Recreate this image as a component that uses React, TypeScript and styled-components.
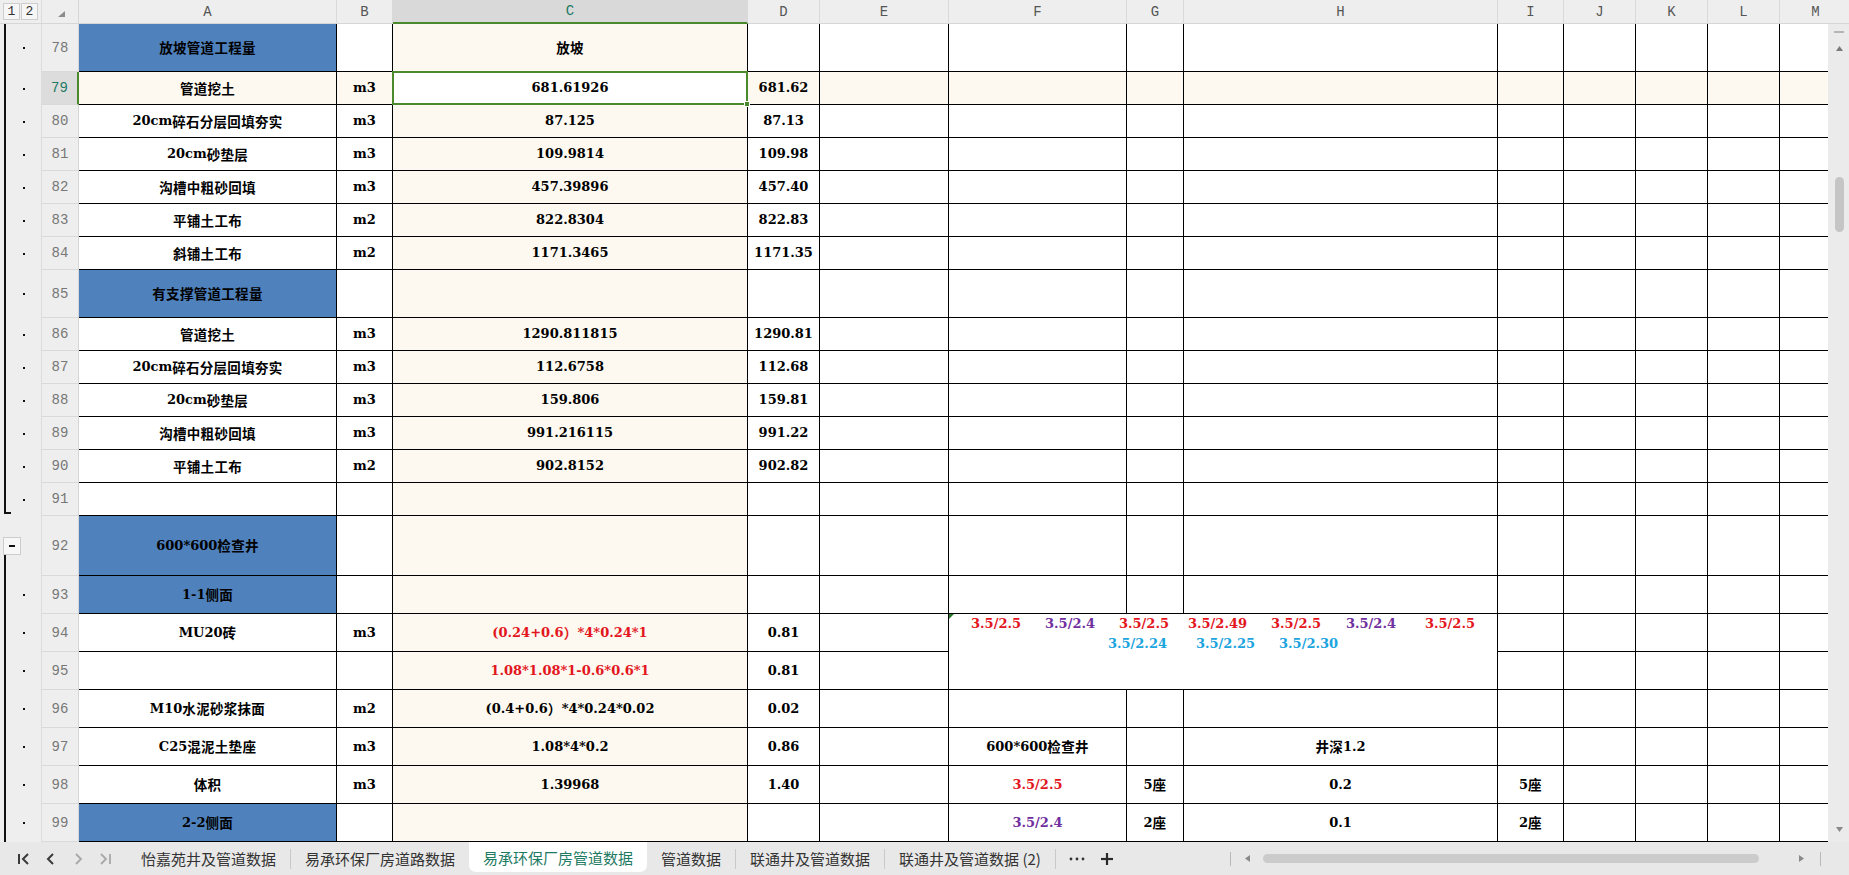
import React from 'react';
import styled, { createGlobalStyle, css } from 'styled-components';

const GlobalStyle = createGlobalStyle`
  html, body { margin: 0; padding: 0; background: #ffffff; }
  body { width: 1849px; height: 875px; overflow: hidden; }
  *, *::before, *::after { box-sizing: border-box; }
`;

const GREEN = '#4b8a2c';
const TEAL = '#1d7a63';
const CREAM = '#fdf9f0';
const BLUE = '#4f81bd';
const RED = '#e3161e';
const PURPLE = '#7030a0';
const CYAN = '#1ba4de';

const COLS = ['A', 'B', 'C', 'D', 'E', 'F', 'G', 'H', 'I', 'J', 'K', 'L', 'M'] as const;
type Col = (typeof COLS)[number];
const COL_W: Record<Col, number> = {
  A: 258, B: 56, C: 355, D: 72, E: 129, F: 178, G: 57, H: 314, I: 66, J: 72, K: 72, L: 72, M: 72,
};

type CellDef = { t?: string; color?: string; blue?: boolean };
type GMode = 'line' | 'end' | 'button';
type RowDef = { n: number; h: number; g: GMode; cells: Partial<Record<Col, CellDef>> };

const item = (a: string, b: string, c: string, d: string) => ({
  A: { t: a }, B: { t: b }, C: { t: c }, D: { t: d },
});

const ROWS: RowDef[] = [
  { n: 78, h: 48, g: 'line', cells: { A: { t: '放坡管道工程量', blue: true }, C: { t: '放坡' } } },
  { n: 79, h: 33, g: 'line', cells: item('管道挖土', 'm3', '681.61926', '681.62') },
  { n: 80, h: 33, g: 'line', cells: item('20cm碎石分层回填夯实', 'm3', '87.125', '87.13') },
  { n: 81, h: 33, g: 'line', cells: item('20cm砂垫层', 'm3', '109.9814', '109.98') },
  { n: 82, h: 33, g: 'line', cells: item('沟槽中粗砂回填', 'm3', '457.39896', '457.40') },
  { n: 83, h: 33, g: 'line', cells: item('平铺土工布', 'm2', '822.8304', '822.83') },
  { n: 84, h: 33, g: 'line', cells: item('斜铺土工布', 'm2', '1171.3465', '1171.35') },
  { n: 85, h: 48, g: 'line', cells: { A: { t: '有支撑管道工程量', blue: true } } },
  { n: 86, h: 33, g: 'line', cells: item('管道挖土', 'm3', '1290.811815', '1290.81') },
  { n: 87, h: 33, g: 'line', cells: item('20cm碎石分层回填夯实', 'm3', '112.6758', '112.68') },
  { n: 88, h: 33, g: 'line', cells: item('20cm砂垫层', 'm3', '159.806', '159.81') },
  { n: 89, h: 33, g: 'line', cells: item('沟槽中粗砂回填', 'm3', '991.216115', '991.22') },
  { n: 90, h: 33, g: 'line', cells: item('平铺土工布', 'm2', '902.8152', '902.82') },
  { n: 91, h: 33, g: 'end', cells: {} },
  { n: 92, h: 60, g: 'button', cells: { A: { t: '600*600检查井', blue: true } } },
  { n: 93, h: 38, g: 'line', cells: { A: { t: '1-1侧面', blue: true } } },
  {
    n: 94, h: 38, g: 'line',
    cells: { A: { t: 'MU20砖' }, B: { t: 'm3' }, C: { t: '(0.24+0.6）*4*0.24*1', color: RED }, D: { t: '0.81' } },
  },
  { n: 95, h: 38, g: 'line', cells: { C: { t: '1.08*1.08*1-0.6*0.6*1', color: RED }, D: { t: '0.81' } } },
  { n: 96, h: 38, g: 'line', cells: item('M10水泥砂浆抹面', 'm2', '(0.4+0.6）*4*0.24*0.02', '0.02') },
  {
    n: 97, h: 38, g: 'line',
    cells: { ...item('C25混泥土垫座', 'm3', '1.08*4*0.2', '0.86'), F: { t: '600*600检查井' }, H: { t: '井深1.2' } },
  },
  {
    n: 98, h: 38, g: 'line',
    cells: {
      ...item('体积', 'm3', '1.39968', '1.40'),
      F: { t: '3.5/2.5', color: RED }, G: { t: '5座' }, H: { t: '0.2' }, I: { t: '5座' },
    },
  },
  {
    n: 99, h: 38, g: 'line',
    cells: {
      A: { t: '2-2侧面', blue: true },
      F: { t: '3.5/2.4', color: PURPLE }, G: { t: '2座' }, H: { t: '0.1' }, I: { t: '2座' },
    },
  },
];

const NOTE_LINES: { t: string; color: string; gap: number }[][] = [
  [
    { t: '3.5/2.5', color: RED, gap: 0 },
    { t: '3.5/2.4', color: PURPLE, gap: 24 },
    { t: '3.5/2.5', color: RED, gap: 24 },
    { t: '3.5/2.49', color: RED, gap: 19 },
    { t: '3.5/2.5', color: RED, gap: 24 },
    { t: '3.5/2.4', color: PURPLE, gap: 25 },
    { t: '3.5/2.5', color: RED, gap: 29 },
  ],
  [
    { t: '3.5/2.24', color: CYAN, gap: 0 },
    { t: '3.5/2.25', color: CYAN, gap: 29 },
    { t: '3.5/2.30', color: CYAN, gap: 24 },
  ],
];

const GRID_COLS = `42px 37px ${COLS.map((c) => `${COL_W[c]}px`).join(' ')}`;
const GRID_ROWS = `24px ${ROWS.map((r) => `${r.h}px`).join(' ')}`;

/* ---------- layout ---------- */
const Root = styled.div`
  width: 1849px;
  height: 875px;
  display: flex;
  flex-direction: column;
  overflow: hidden;
  background: #fff;
`;

const Main = styled.div`
  display: flex;
  height: 842px;
`;

const SheetViewport = styled.div`
  flex: 1;
  min-width: 0;
  overflow: hidden;
`;

const SheetGrid = styled.div`
  display: grid;
  grid-template-columns: ${GRID_COLS};
  grid-template-rows: ${GRID_ROWS};
  width: max-content;
`;

/* ---------- headers ---------- */
const headFont = css`
  font-family: 'Liberation Mono', 'DejaVu Sans Mono', monospace;
  font-size: 14px;
`;

const GutterHead = styled.div`
  background: #eeeeee;
  border-right: 1px solid #dcdcdc;
  border-bottom: 1px solid #d6d6d6;
  display: flex;
  align-items: flex-start;
  padding: 3px 0 0 3px;
  gap: 1px;
`;

const LevelBtn = styled.div`
  width: 17px;
  height: 17px;
  border: 1px solid #cdcdcd;
  background: #f6f6f6;
  display: flex;
  align-items: center;
  justify-content: center;
  ${headFont};
  font-size: 13px;
  color: #333;
`;

const Corner = styled.div`
  background: #eeeeee;
  border-right: 1px solid #d6d6d6;
  border-bottom: 1px solid #d6d6d6;
  display: flex;
  padding: 11px 0 0 16px;
`;

const ColHead = styled.div<{ $active?: boolean }>`
  background: ${(p) => (p.$active ? '#d9d9d9' : '#eeeeee')};
  color: ${(p) => (p.$active ? TEAL : '#555')};
  border-right: 1px solid #d9d9d9;
  border-bottom: ${(p) => (p.$active ? `2px solid ${GREEN}` : '1px solid #d6d6d6')};
  display: flex;
  align-items: center;
  justify-content: center;
  ${headFont};
`;

const RowHead = styled.div<{ $active?: boolean }>`
  background: ${(p) => (p.$active ? '#dcdcdc' : '#eeeeee')};
  color: ${(p) => (p.$active ? TEAL : '#777')};
  border-bottom: 1px solid #d9d9d9;
  border-right: ${(p) => (p.$active ? `2px solid ${GREEN}` : '1px solid #d6d6d6')};
  display: flex;
  align-items: center;
  justify-content: center;
  ${headFont};
`;

/* ---------- outline gutter ---------- */
const Gutter = styled.div<{ $mode: GMode }>`
  position: relative;
  background: #eeeeee;
  border-right: 1px solid #dcdcdc;
  display: flex;
  align-items: center;

  &::before {
    content: '';
    position: absolute;
    left: 4px;
    width: 2px;
    background: #111;
    top: ${(p) => (p.$mode === 'button' ? 'calc(50% + 9px)' : '0')};
    bottom: ${(p) => (p.$mode === 'end' ? '2px' : '0')};
  }

  ${(p) =>
    p.$mode === 'end' &&
    css`
      &::after {
        content: '';
        position: absolute;
        left: 4px;
        bottom: 2px;
        width: 7px;
        height: 2px;
        background: #111;
      }
    `}
`;

const Dot = styled.span`
  width: 2px;
  height: 2px;
  background: #111;
  margin-left: 23px;
`;

const MinusBtn = styled.div`
  width: 18px;
  height: 18px;
  margin-left: 3px;
  border: 1px solid #cdcdcd;
  background: #f7f7f7;
  display: flex;
  align-items: center;
  justify-content: center;
  position: relative;
  z-index: 1;

  &::after {
    content: '';
    width: 6px;
    height: 2px;
    background: #111;
  }
`;

/* ---------- cells ---------- */
const Cell = styled.div<{ $bg: string; $color: string }>`
  position: relative;
  background: ${(p) => p.$bg};
  color: ${(p) => p.$color};
  border-right: 1px solid #000;
  border-bottom: 1px solid #000;
  display: flex;
  align-items: center;
  justify-content: center;
  font-family: 'DejaVu Serif', 'Noto Sans CJK SC', serif;
  font-weight: 700;
  font-size: 13px;
  line-height: 1.2;
  white-space: pre;
`;

const Han = styled.span`
  font-family: 'Noto Sans CJK SC', sans-serif;
  font-weight: 700;
  font-size: 13.5px;
  letter-spacing: 0.3px;
`;

const Selection = styled.div`
  position: absolute;
  top: -1px;
  left: -1px;
  right: -1px;
  bottom: -1px;
  border: 2px solid ${GREEN};
  pointer-events: none;
  z-index: 2;
`;

const FillHandle = styled.div`
  position: absolute;
  right: -4px;
  bottom: -4px;
  width: 6px;
  height: 6px;
  background: ${GREEN};
  border: 1px solid #fff;
  z-index: 3;
`;

const NoteCell = styled.div`
  grid-column: span 3;
  grid-row: span 2;
  position: relative;
  background: #fff;
  border-right: 1px solid #000;
  border-bottom: 1px solid #000;
  display: flex;
  flex-direction: column;
  align-items: center;
  font-family: 'DejaVu Serif', serif;
  font-weight: 700;
  font-size: 13px;
  line-height: 20px;
`;

const ErrorMark = styled.div`
  position: absolute;
  top: 0;
  left: 0;
  width: 0;
  height: 0;
  border-top: 5px solid #2b7a2b;
  border-right: 5px solid transparent;
`;

const NoteLine = styled.div`
  display: flex;
  white-space: nowrap;
`;

const NoteNum = styled.span<{ $color: string; $gap: number }>`
  color: ${(p) => p.$color};
  margin-left: ${(p) => p.$gap}px;
`;

/* ---------- vertical scrollbar ---------- */
const VScroll = styled.div`
  width: 21px;
  flex: none;
  display: flex;
  flex-direction: column;
  background: #ebebeb;
`;

const VScrollHead = styled.div`
  height: 24px;
  flex: none;
  background: #eeeeee;
  border-bottom: 1px solid #d6d6d6;
`;

const VTrack = styled.div`
  flex: 1;
  display: flex;
  flex-direction: column;
  align-items: center;
  padding: 7px 0 10px 1px;
`;

const VDash = styled.div`
  width: 10px;
  height: 2px;
  background: #b5b5b5;
`;

const ArrowBox = styled.div<{ $mt?: number }>`
  display: flex;
  align-items: center;
  margin-top: ${(p) => p.$mt ?? 0}px;
`;

const VThumb = styled.div`
  width: 9px;
  height: 55px;
  margin-top: 126px;
  border-radius: 5px;
  background: #c5c5c5;
`;

const Grow = styled.div`
  flex: 1;
`;

/* ---------- tab bar ---------- */
const TabBar = styled.div`
  height: 33px;
  flex: none;
  display: flex;
  align-items: center;
  background: #e8e8e8;
  font-family: 'Noto Sans CJK SC', 'Noto Sans', sans-serif;
  font-size: 15px;
  color: #333;
`;

const NavGroup = styled.div`
  width: 127px;
  flex: none;
  display: flex;
  align-items: center;
  padding-left: 10px;
`;

const NavBtn = styled.div`
  width: 27px;
  height: 20px;
  display: flex;
  align-items: center;
  justify-content: center;
`;

const Tab = styled.div<{ $active?: boolean }>`
  flex: none;
  padding: 0 14px;
  height: ${(p) => (p.$active ? '30px' : '33px')};
  align-self: flex-start;
  display: flex;
  align-items: center;
  white-space: nowrap;
  color: ${(p) => (p.$active ? TEAL : '#333')};
  background: ${(p) => (p.$active ? '#ffffff' : 'transparent')};
  border-radius: ${(p) => (p.$active ? '0 0 7px 7px' : '0')};
  padding-top: ${(p) => (p.$active ? '1px' : '0')};
`;

const TabSep = styled.div`
  width: 1px;
  height: 20px;
  flex: none;
  background: #c9c9c9;
`;

const MoreBtn = styled.div`
  margin-left: 13px;
  display: flex;
`;

const PlusBtn = styled.div`
  margin-left: 15px;
  display: flex;
`;

const HScroll = styled.div`
  width: 619px;
  flex: none;
  display: flex;
  align-items: center;
`;

const HDivider = styled.div<{ $ml?: number }>`
  width: 1px;
  height: 14px;
  background: #b9b9b9;
  margin-left: ${(p) => p.$ml ?? 0}px;
`;

const HThumb = styled.div`
  width: 496px;
  height: 9px;
  margin-left: 13px;
  border-radius: 5px;
  background: #cbcbcb;
`;

const HSpacer = styled.div<{ $w: number }>`
  width: ${(p) => p.$w}px;
  flex: none;
`;

/* ---------- helpers ---------- */
const HAN_RE = /([\u2E80-\u9FFF\uFF00-\uFFEF\u3000-\u303F]+)/;

function Rich({ text }: { text: string }) {
  const parts = text.split(HAN_RE).filter((p) => p.length > 0);
  return (
    <>
      {parts.map((p, i) =>
        HAN_RE.test(p) ? <Han key={i}>{p}</Han> : <React.Fragment key={i}>{p}</React.Fragment>
      )}
    </>
  );
}

function bgFor(row: number, col: Col, def?: CellDef) {
  if (def?.blue) return BLUE;
  if (row === 79 && col === 'C') return '#ffffff';
  if (col === 'C' || row === 79) return CREAM;
  return '#ffffff';
}

const Chevron = ({ dir, color, bar }: { dir: 'l' | 'r'; color: string; bar?: boolean }) => (
  <svg width="14" height="12" viewBox="0 0 14 12">
    {dir === 'l' ? (
      <>
        {bar && <line x1="2" y1="1" x2="2" y2="11" stroke={color} strokeWidth="2" />}
        <polyline points={bar ? '11,1 6,6 11,11' : '9,1 4,6 9,11'} fill="none" stroke={color} strokeWidth="2" />
      </>
    ) : (
      <>
        <polyline points={bar ? '3,1 8,6 3,11' : '5,1 10,6 5,11'} fill="none" stroke={color} strokeWidth="1.8" />
        {bar && <line x1="12" y1="1" x2="12" y2="11" stroke={color} strokeWidth="1.8" />}
      </>
    )}
  </svg>
);

const Tri = ({ dir, color }: { dir: 'u' | 'd' | 'l' | 'r'; color: string }) => {
  const pts = { u: '0,5 3.5,0 7,5', d: '0,0 7,0 3.5,5', l: '5,0 5,7 0,3.5', r: '0,0 5,3.5 0,7' }[dir];
  const w = dir === 'u' || dir === 'd' ? 7 : 5;
  const h = dir === 'u' || dir === 'd' ? 5 : 7;
  return (
    <svg width={w} height={h} viewBox={`0 0 ${w} ${h}`}>
      <polygon points={pts} fill={color} />
    </svg>
  );
};

function SheetRow({ row }: { row: RowDef }) {
  const active = row.n === 79;
  const out: React.ReactNode[] = [];
  out.push(
    <Gutter key="g" $mode={row.g}>
      {row.g === 'button' ? <MinusBtn /> : <Dot />}
    </Gutter>
  );
  out.push(
    <RowHead key="h" $active={active}>
      {row.n}
    </RowHead>
  );
  COLS.forEach((col) => {
    if (row.n === 94 && col === 'F') {
      out.push(
        <NoteCell key={col}>
          <ErrorMark />
          {NOTE_LINES.map((line, li) => (
            <NoteLine key={li}>
              {line.map((n, ni) => (
                <NoteNum key={ni} $color={n.color} $gap={n.gap}>
                  {n.t}
                </NoteNum>
              ))}
            </NoteLine>
          ))}
        </NoteCell>
      );
      return;
    }
    if ((row.n === 94 && (col === 'G' || col === 'H')) || (row.n === 95 && (col === 'F' || col === 'G' || col === 'H'))) {
      return;
    }
    const def = row.cells[col];
    const selected = active && col === 'C';
    out.push(
      <Cell key={col} $bg={bgFor(row.n, col, def)} $color={def?.color ?? '#000'}>
        {def?.t ? <Rich text={def.t} /> : null}
        {selected && (
          <Selection>
            <FillHandle />
          </Selection>
        )}
      </Cell>
    );
  });
  return <>{out}</>;
}

export default function App() {
  return (
    <>
      <GlobalStyle />
      <Root>
        <Main>
          <SheetViewport>
            <SheetGrid>
              <GutterHead>
                <LevelBtn>1</LevelBtn>
                <LevelBtn>2</LevelBtn>
              </GutterHead>
              <Corner>
                <svg width="7" height="6" viewBox="0 0 7 6">
                  <polygon points="7,0 7,6 0,6" fill="#8c8c8c" />
                </svg>
              </Corner>
              {COLS.map((c) => (
                <ColHead key={c} $active={c === 'C'}>
                  {c}
                </ColHead>
              ))}
              {ROWS.map((r) => (
                <SheetRow key={r.n} row={r} />
              ))}
            </SheetGrid>
          </SheetViewport>
          <VScroll>
            <VScrollHead />
            <VTrack>
              <VDash />
              <ArrowBox $mt={13}>
                <Tri dir="u" color="#7a7a7a" />
              </ArrowBox>
              <VThumb />
              <Grow />
              <ArrowBox>
                <Tri dir="d" color="#8a8a8a" />
              </ArrowBox>
            </VTrack>
          </VScroll>
        </Main>
        <TabBar>
          <NavGroup>
            <NavBtn>
              <Chevron dir="l" color="#3a3a3a" bar />
            </NavBtn>
            <NavBtn>
              <Chevron dir="l" color="#3a3a3a" />
            </NavBtn>
            <NavBtn>
              <Chevron dir="r" color="#a8a8a8" />
            </NavBtn>
            <NavBtn>
              <Chevron dir="r" color="#a8a8a8" bar />
            </NavBtn>
          </NavGroup>
          <Tab>怡嘉苑井及管道数据</Tab>
          <TabSep />
          <Tab>易承环保厂房道路数据</Tab>
          <Tab $active>易承环保厂房管道数据</Tab>
          <Tab>管道数据</Tab>
          <TabSep />
          <Tab>联通井及管道数据</Tab>
          <TabSep />
          <Tab>联通井及管道数据 (2)</Tab>
          <TabSep />
          <MoreBtn>
            <svg width="16" height="4" viewBox="0 0 16 4">
              <circle cx="2" cy="2" r="1.4" fill="#333" />
              <circle cx="8" cy="2" r="1.4" fill="#333" />
              <circle cx="14" cy="2" r="1.4" fill="#333" />
            </svg>
          </MoreBtn>
          <PlusBtn>
            <svg width="14" height="14" viewBox="0 0 14 14">
              <line x1="7" y1="1" x2="7" y2="13" stroke="#2a2a2a" strokeWidth="2.2" />
              <line x1="1" y1="7" x2="13" y2="7" stroke="#2a2a2a" strokeWidth="2.2" />
            </svg>
          </PlusBtn>
          <Grow />
          <HScroll>
            <HDivider />
            <HSpacer $w={14} />
            <Tri dir="l" color="#8a8a8a" />
            <HThumb />
            <HSpacer $w={40} />
            <Tri dir="r" color="#8a8a8a" />
            <HDivider $ml={16} />
          </HScroll>
        </TabBar>
      </Root>
    </>
  );
}
